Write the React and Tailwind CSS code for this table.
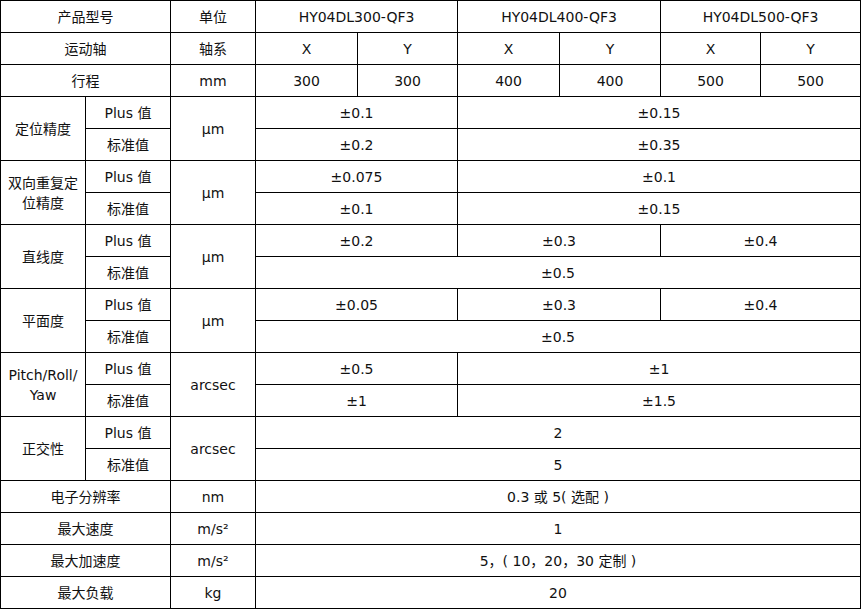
import React from "react";

const C = ({ children, className = "" }) => (
  <div className={"bg-white flex items-center justify-center text-center " + className}>{children}</div>
);

export default function App() {
  return (
    <div
      className="grid w-[861px] grid-cols-[84px_84px_84px_101px_99px_101px_100px_99px_99px] grid-rows-[repeat(19,31px)] gap-px bg-black p-px text-[14px] leading-[20px] text-[#111]"
      style={{ fontFamily: '"DejaVu Sans", "Noto Sans CJK SC", sans-serif' }}
    >
      <C className="col-span-2">产品型号</C>
      <C>单位</C>
      <C className="col-span-2">HY04DL300-QF3</C>
      <C className="col-span-2">HY04DL400-QF3</C>
      <C className="col-span-2">HY04DL500-QF3</C>

      <C className="col-span-2">运动轴</C>
      <C>轴系</C>
      <C>X</C>
      <C>Y</C>
      <C>X</C>
      <C>Y</C>
      <C>X</C>
      <C>Y</C>

      <C className="col-span-2">行程</C>
      <C>mm</C>
      <C>300</C>
      <C>300</C>
      <C>400</C>
      <C>400</C>
      <C>500</C>
      <C>500</C>

      <C className="row-span-2">定位精度</C>
      <C>Plus 值</C>
      <C className="row-span-2">μm</C>
      <C className="col-span-2">±0.1</C>
      <C className="col-span-4">±0.15</C>
      <C>标准值</C>
      <C className="col-span-2">±0.2</C>
      <C className="col-span-4">±0.35</C>

      <C className="row-span-2 flex-col">
        <span>双向重复定</span>
        <span>位精度</span>
      </C>
      <C>Plus 值</C>
      <C className="row-span-2">μm</C>
      <C className="col-span-2">±0.075</C>
      <C className="col-span-4">±0.1</C>
      <C>标准值</C>
      <C className="col-span-2">±0.1</C>
      <C className="col-span-4">±0.15</C>

      <C className="row-span-2">直线度</C>
      <C>Plus 值</C>
      <C className="row-span-2">μm</C>
      <C className="col-span-2">±0.2</C>
      <C className="col-span-2">±0.3</C>
      <C className="col-span-2">±0.4</C>
      <C>标准值</C>
      <C className="col-span-6">±0.5</C>

      <C className="row-span-2">平面度</C>
      <C>Plus 值</C>
      <C className="row-span-2">μm</C>
      <C className="col-span-2">±0.05</C>
      <C className="col-span-2">±0.3</C>
      <C className="col-span-2">±0.4</C>
      <C>标准值</C>
      <C className="col-span-6">±0.5</C>

      <C className="row-span-2 flex-col">
        <span>Pitch/Roll/</span>
        <span>Yaw</span>
      </C>
      <C>Plus 值</C>
      <C className="row-span-2">arcsec</C>
      <C className="col-span-2">±0.5</C>
      <C className="col-span-4">±1</C>
      <C>标准值</C>
      <C className="col-span-2">±1</C>
      <C className="col-span-4">±1.5</C>

      <C className="row-span-2">正交性</C>
      <C>Plus 值</C>
      <C className="row-span-2">arcsec</C>
      <C className="col-span-6">2</C>
      <C>标准值</C>
      <C className="col-span-6">5</C>

      <C className="col-span-2">电子分辨率</C>
      <C>nm</C>
      <C className="col-span-6">0.3 或 5( 选配 )</C>

      <C className="col-span-2">最大速度</C>
      <C>m/s²</C>
      <C className="col-span-6">1</C>

      <C className="col-span-2">最大加速度</C>
      <C>m/s²</C>
      <C className="col-span-6">5，( 10，20，30 定制 )</C>

      <C className="col-span-2">最大负载</C>
      <C>kg</C>
      <C className="col-span-6">20</C>
    </div>
  );
}
